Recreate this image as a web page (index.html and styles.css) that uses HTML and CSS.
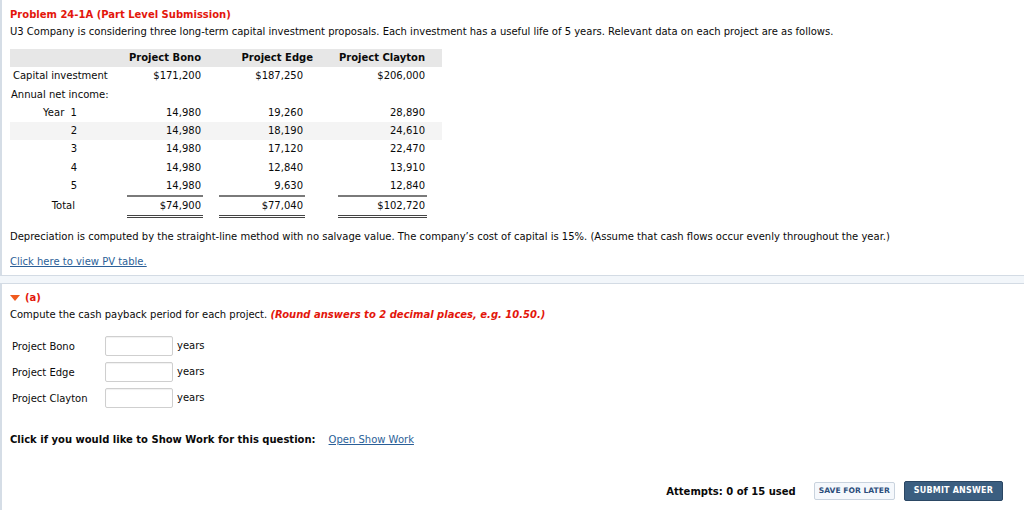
FILE: index.html
```html
<!DOCTYPE html>
<html>
<head>
<meta charset="utf-8">
<link rel="stylesheet" href="styles.css">
</head>
<body>
<div class="page">
  <section class="panel panel-top">
    <div class="title">Problem 24-1A (Part Level Submission)</div>
    <div class="line">U3 Company is considering three long-term capital investment proposals. Each investment has a useful life of 5 years. Relevant data on each project are as follows.</div>
    <div class="data">
      <div class="row head">
        <div class="lab"></div>
        <div class="c1">Project Bono</div>
        <div class="c2">Project Edge</div>
        <div class="c3">Project Clayton</div>
      </div>
      <div class="row">
        <div class="lab left">Capital investment</div>
        <div class="c1">$171,200</div>
        <div class="c2">$187,250</div>
        <div class="c3">$206,000</div>
      </div>
      <div class="row">
        <div class="lab left annual">Annual net income:</div>
        <div class="c1"></div><div class="c2"></div><div class="c3"></div>
      </div>
      <div class="row">
        <div class="lab">Year&nbsp; 1</div>
        <div class="c1">14,980</div>
        <div class="c2">19,260</div>
        <div class="c3">28,890</div>
      </div>
      <div class="row shade">
        <div class="lab">2</div>
        <div class="c1">14,980</div>
        <div class="c2">18,190</div>
        <div class="c3">24,610</div>
      </div>
      <div class="row">
        <div class="lab">3</div>
        <div class="c1">14,980</div>
        <div class="c2">17,120</div>
        <div class="c3">22,470</div>
      </div>
      <div class="row">
        <div class="lab">4</div>
        <div class="c1">14,980</div>
        <div class="c2">12,840</div>
        <div class="c3">13,910</div>
      </div>
      <div class="row">
        <div class="lab">5</div>
        <div class="c1">14,980</div>
        <div class="c2">9,630</div>
        <div class="c3">12,840</div>
      </div>
      <div class="row total">
        <div class="lab tot">Total</div>
        <div class="c1"><span class="bar">$74,900</span></div>
        <div class="c2"><span class="bar">$77,040</span></div>
        <div class="c3"><span class="bar">$102,720</span></div>
      </div>
    </div>
    <div class="line dep">Depreciation is computed by the straight-line method with no salvage value. The company’s cost of capital is 15%. (Assume that cash flows occur evenly throughout the year.)</div>
    <div class="line pv"><a class="link" href="#">Click here to view PV table.</a></div>
  </section>
  <div class="gap"></div>
  <section class="panel panel-bottom">
    <div class="part"><span class="tri"></span><span class="parttxt">(a)</span></div>
    <div class="line">Compute the cash payback period for each project. <span class="hint">(Round answers to 2 decimal places, e.g. 10.50.)</span></div>
    <div class="answers">
      <div class="arow"><span class="alab">Project Bono</span><span class="box"></span><span class="unit">years</span></div>
      <div class="arow"><span class="alab">Project Edge</span><span class="box"></span><span class="unit">years</span></div>
      <div class="arow"><span class="alab">Project Clayton</span><span class="box"></span><span class="unit">years</span></div>
    </div>
    <div class="line work"><b>Click if you would like to Show Work for this question:</b><a class="link showlink" href="#">Open Show Work</a></div>
    <div class="footer">
      <span class="attempts">Attempts: 0 of 15 used</span>
      <span class="btn save">SAVE FOR LATER</span>
      <span class="btn submit">SUBMIT ANSWER</span>
    </div>
  </section>
</div>
</body>
</html>
```
FILE: styles.css
```css
html, body {
  margin: 0;
  padding: 0;
  background: #fff;
}
body {
  font-family: "DejaVu Sans", Verdana, sans-serif;
  font-size: 10px;
  color: #0a0a0a;
  width: 1024px;
  height: 510px;
  overflow: hidden;
}
.page {
  display: flex;
  flex-direction: column;
  height: 510px;
}
.panel {
  border-left: 2px solid #d5dde6;
  padding-left: 8px;
  background: #fff;
}
.panel-top {
  padding-top: 6px;
  border-bottom: 1px solid #d3dbe4;
  height: 276px;
  box-sizing: border-box;
  flex: none;
}
.gap {
  height: 7px;
  background: #f2f6fa;
  flex: none;
}
.panel-bottom {
  border-top: 1px solid #d3dbe4;
  padding-top: 6px;
  flex: 1;
}
.title {
  color: #e3160b;
  font-weight: bold;
  line-height: 17px;
}
.line {
  line-height: 17px;
  white-space: nowrap;
}
.data {
  margin-top: 9px;
  width: 432px;
}
.row {
  display: grid;
  grid-template-columns: 108px 94px 106px 124px;
  height: 18.25px;
  line-height: 18.25px;
}
.row > div {
  text-align: right;
  white-space: nowrap;
}
.row.head {
  background: #e7e7e7;
  font-weight: bold;
}
.row.shade {
  background: #f4f4f4;
}
.lab {
  padding-right: 41px;
}
.lab.left {
  text-align: left !important;
  padding-left: 3px;
  padding-right: 0;
}
.lab.annual {
  padding-left: 1px;
}
.lab.tot {
  padding-right: 43px;
  padding-top: 2px;
  line-height: 18px;
}
.c1 { padding-right: 11px; }
.c2 { padding-right: 15px; }
.c3 { padding-right: 17px; }
.head .c2 { padding-right: 5px; }
.row.total {
  height: auto;
}
.row.total .c1, .row.total .c2, .row.total .c3 {
  padding-right: 0;
}
.bar {
  display: block;
  border-top: 2px solid #7a7a7a;
  border-bottom: 3px double #444;
  line-height: 18px;
}
.c1 .bar { margin: 0 9px 0 9px; padding-right: 2px; }
.c2 .bar { margin: 0 13px 0 7px; padding-right: 2px; }
.c3 .bar { margin: 0 15px 0 20px; padding-right: 2px; }
.dep {
  margin-top: 10px;
}
.pv {
  margin-top: 8px;
}
.link {
  color: #2b5f98;
  text-decoration: underline;
}
.part {
  display: flex;
  align-items: center;
  line-height: 16px;
  height: 16px;
}
.tri {
  width: 0;
  height: 0;
  border-left: 5px solid transparent;
  border-right: 5px solid transparent;
  border-top: 6px solid #f05a1e;
  margin-right: 5px;
}
.parttxt {
  color: #e3160b;
  font-weight: bold;
}
.hint {
  color: #e3160b;
  font-weight: bold;
  font-style: italic;
}
.answers {
  margin-top: 13px;
  display: flex;
  flex-direction: column;
  gap: 6px;
}
.arow {
  display: flex;
  align-items: center;
  height: 20px;
}
.alab {
  width: 93px;
  padding-left: 2px;
}
.box {
  width: 66px;
  height: 18px;
  border: 1px solid #cfcfcf;
  border-radius: 2px;
  box-shadow: inset 0 1px 1px rgba(0,0,0,0.06);
  margin-right: 4px;
}
.unit {
  line-height: 20px;
}
.work {
  margin-top: 23px;
}
.showlink {
  margin-left: 13px;
}
.footer {
  margin-top: 33px;
  display: flex;
  justify-content: flex-end;
  align-items: center;
  padding-right: 21px;
}
.attempts {
  font-weight: bold;
  margin-right: 18px;
}
.btn {
  font-weight: bold;
  font-size: 8px;
  border-radius: 2px;
  line-height: 16px;
}
.save {
  background: #f5f8fc;
  color: #2d4f7c;
  border: 1px solid #c9d3de;
  margin-right: 9px;
  padding: 0 4px;
  font-size: 7.6px;
}
.submit {
  background: #3b5e80;
  color: #fff;
  border: 1px solid #2b4764;
  padding: 1px 9px;
  letter-spacing: 0.2px;
}
```
